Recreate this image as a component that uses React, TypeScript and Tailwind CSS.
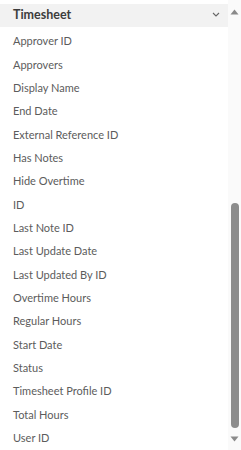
const fields = [
  'Approver ID',
  'Approvers',
  'Display Name',
  'End Date',
  'External Reference ID',
  'Has Notes',
  'Hide Overtime',
  'ID',
  'Last Note ID',
  'Last Update Date',
  'Last Updated By ID',
  'Overtime Hours',
  'Regular Hours',
  'Start Date',
  'Status',
  'Timesheet Profile ID',
  'Total Hours',
  'User ID',
];

export default function App() {
  return (
    <div className="w-[241px] h-[450px] flex bg-white overflow-hidden" style={{ fontFamily: 'Lato, "Liberation Sans", sans-serif' }}>
      {/* Field list */}
      <div className="w-[228px] flex flex-col pt-[4px]">
        <div className="h-[23px] bg-[#f2f2f2] flex items-center justify-between pl-[13px] pr-[8px]">
          <span className="text-[12.5px] font-bold text-[#3c3c3c]">Timesheet</span>
          <svg width="8" height="5" viewBox="0 0 8 5" className="mb-[1px]">
            <path d="M1 1l3 3 3-3" fill="none" stroke="#666" strokeWidth="1.1" />
          </svg>
        </div>
        <div className="flex flex-col pt-[3px]">
          {fields.map((f) => (
            <div key={f} className="h-[23.35px] flex items-center pl-[13px] text-[11px] text-[#5c5c5c] whitespace-nowrap">
              {f}
            </div>
          ))}
        </div>
      </div>

      {/* Scrollbar */}
      <div className="w-[13px] bg-[#fafafa] flex flex-col items-center pt-[9px]">
        <svg width="9" height="6" viewBox="0 0 9 6">
          <path d="M4.5 0.5L8.5 5.5H0.5z" fill="#8a8a8a" />
        </svg>
        <div className="mt-[188px] w-[8px] h-[225px] rounded-full bg-[#8c8c8c]" />
        <svg width="9" height="6" viewBox="0 0 9 6" className="mt-[8px]">
          <path d="M0.5 0.5H8.5L4.5 5.5z" fill="#8a8a8a" />
        </svg>
      </div>
    </div>
  );
}
